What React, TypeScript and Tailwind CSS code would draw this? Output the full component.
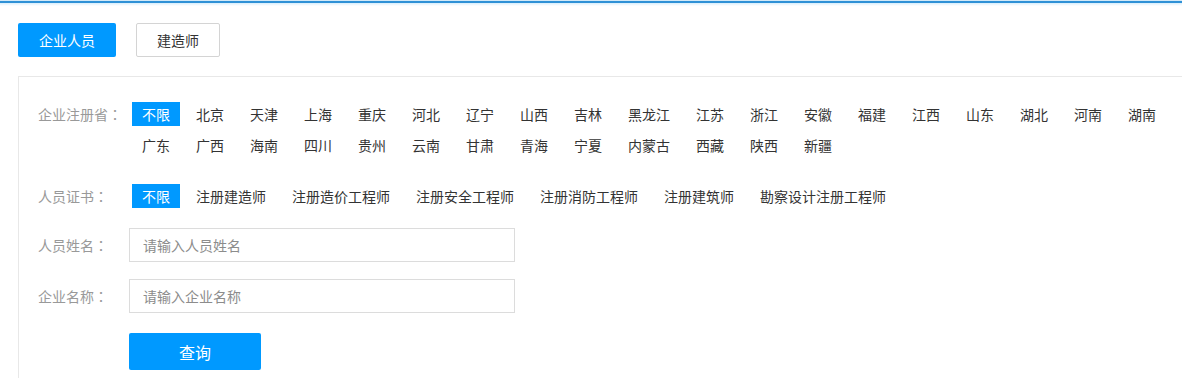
import React from 'react'

const provinces = [
  '北京', '天津', '上海', '重庆', '河北', '辽宁', '山西', '吉林', '黑龙江', '江苏', '浙江', '安徽',
  '福建', '江西', '山东', '湖北', '河南', '湖南', '广东', '广西', '海南', '四川', '贵州', '云南',
  '甘肃', '青海', '宁夏', '内蒙古', '西藏', '陕西', '新疆',
]

const certs = ['注册建造师', '注册造价工程师', '注册安全工程师', '注册消防工程师', '注册建筑师', '勘察设计注册工程师']

function Chip({ label, active }: { label: string; active?: boolean }) {
  return (
    <span
      className={
        active
          ? 'mr-[6px] h-[24px] px-[10px] leading-[24px] bg-[#0099ff] text-white cursor-pointer'
          : 'mr-[6px] h-[24px] px-[10px] leading-[24px] text-[#333] cursor-pointer'
      }
    >
      {label}
    </span>
  )
}

// centred full-width colon, like the YaHei rendering
function Label({ text, className }: { text: string; className: string }) {
  return (
    <div className={className}>
      {text}
      <span style={{ fontFamily: '"Noto Sans CJK TC", sans-serif' }}>：</span>
    </div>
  )
}

export default function App() {
  return (
    <div
      className="w-[1182px] h-[378px] overflow-hidden bg-white text-[14px]"
      style={{ fontFamily: '"Microsoft YaHei", "Noto Sans CJK SC", "Noto Sans", sans-serif' }}
    >
      {/* top accent line */}
      <div className="h-[1px] bg-[#d2e9f8]" />
      <div className="h-[2px] bg-[#2f91d6]" />
      <div className="h-[3px] bg-gradient-to-b from-[#d9eefc] to-white" />

      <div className="pl-[18px] pt-[17px]">
        {/* tabs */}
        <div className="flex gap-[20px]">
          <button className="w-[98px] h-[34px] rounded-[2px] bg-[#0099ff] text-white text-[14px]">企业人员</button>
          <button className="w-[84px] h-[34px] rounded-[2px] border border-[#d4d4d4] bg-white text-[#333] text-[14px]">建造师</button>
        </div>

        {/* filter panel */}
        <div className="mt-[19px] w-[1200px] border-l border-t border-[#e8e8e8] pl-[19px] pt-[25px] pb-[20px]">
          <div className="flex">
            <Label text="企业注册省" className="w-[94px] shrink-0 h-[24px] leading-[24px] text-[#999]" />
            <div className="flex flex-wrap gap-y-[7px] w-[1050px]">
              <Chip label="不限" active />
              {provinces.map((p) => (
                <Chip key={p} label={p} />
              ))}
            </div>
          </div>

          <div className="flex mt-[27px]">
            <Label text="人员证书" className="w-[94px] shrink-0 h-[24px] leading-[24px] text-[#999]" />
            <div className="flex flex-wrap">
              <Chip label="不限" active />
              {certs.map((c) => (
                <Chip key={c} label={c} />
              ))}
            </div>
          </div>

          <div className="flex items-center mt-[20px]">
            <Label text="人员姓名" className="w-[91px] shrink-0 text-[#999]" />
            <input
              className="w-[386px] h-[34px] border border-[#dcdcdc] pl-[13px] text-[14px] text-[#333] placeholder:text-[#8c8c8c] outline-none"
              placeholder="请输入人员姓名"
            />
          </div>

          <div className="flex items-center mt-[17px]">
            <Label text="企业名称" className="w-[91px] shrink-0 text-[#999]" />
            <input
              className="w-[386px] h-[34px] border border-[#dcdcdc] pl-[13px] text-[14px] text-[#333] placeholder:text-[#8c8c8c] outline-none"
              placeholder="请输入企业名称"
            />
          </div>

          <div className="mt-[20px] pl-[91px]">
            <button className="w-[132px] h-[37px] rounded-[2px] bg-[#0099ff] text-white text-[16px]">查询</button>
          </div>
        </div>
      </div>
    </div>
  )
}
